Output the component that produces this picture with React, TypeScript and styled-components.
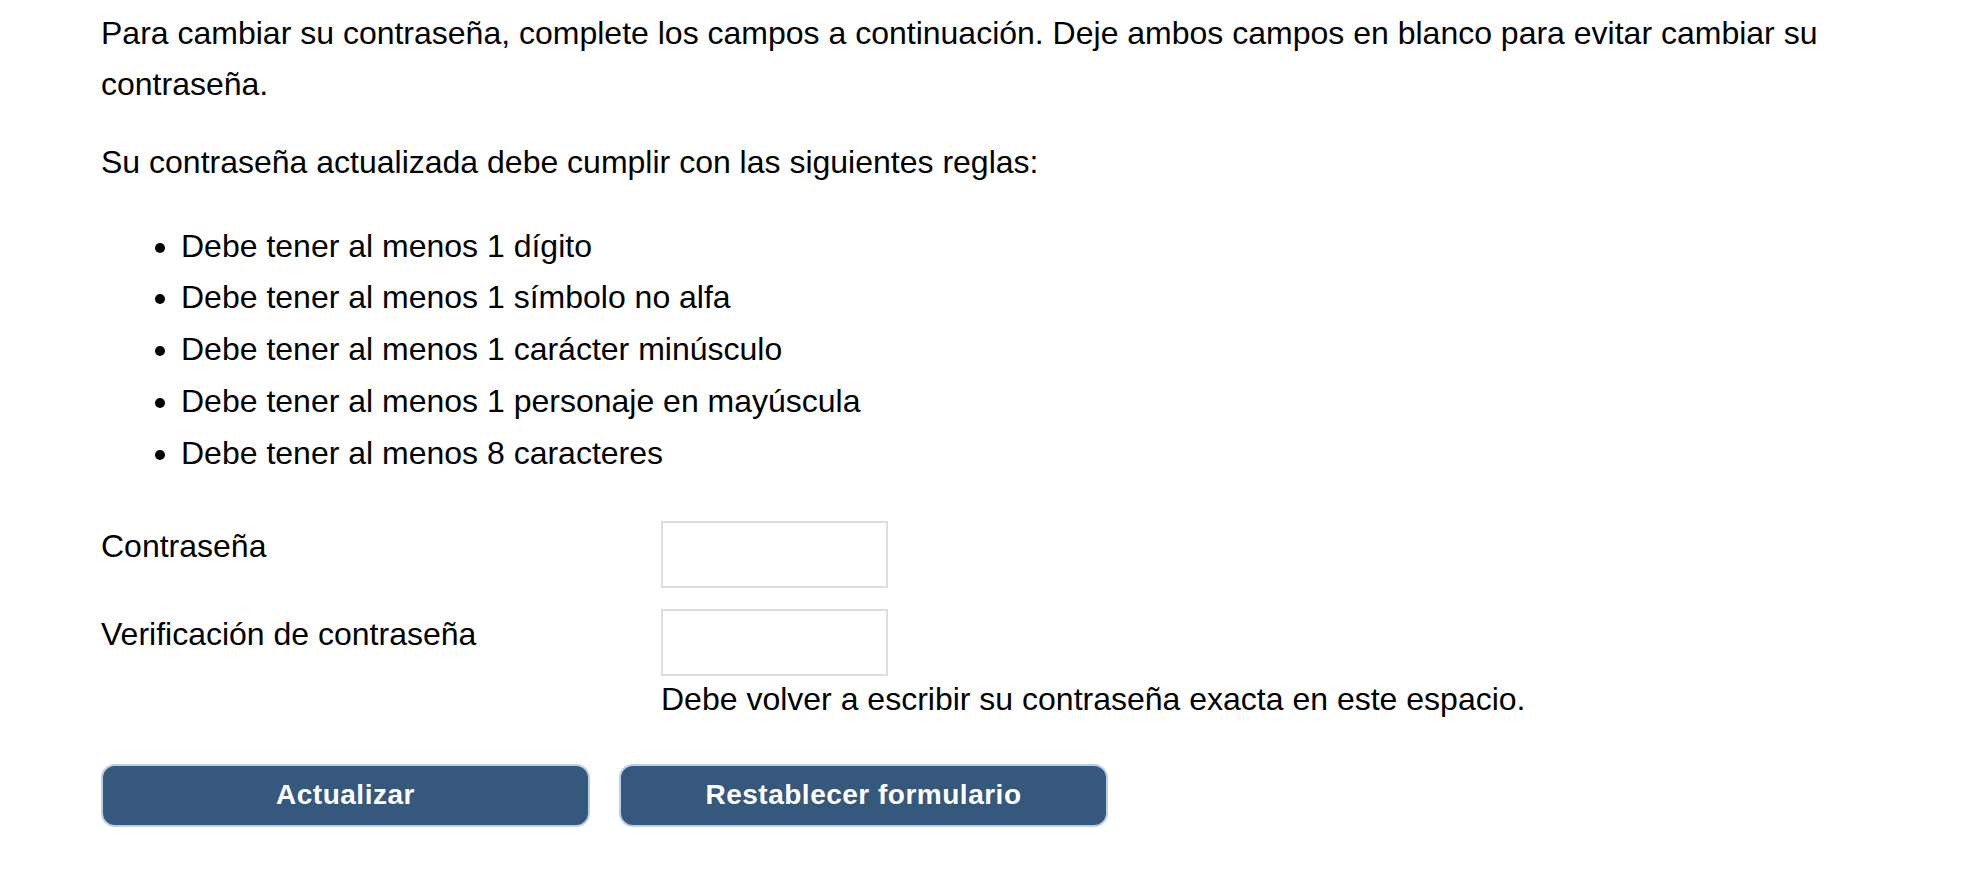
import React from "react";
import styled, { createGlobalStyle } from "styled-components";

const GlobalStyle = createGlobalStyle`
  html, body {
    margin: 0;
    padding: 0;
    background: #ffffff;
  }
  body {
    font-family: "Liberation Sans", Arial, Helvetica, sans-serif;
    color: #000000;
  }
`;

const Page = styled.main`
  box-sizing: border-box;
  width: 1861px;
  padding: 8px 0 40px 101px;
  font-size: 32px;
  line-height: 51.2px;
`;

const Paragraph = styled.p`
  margin: 0 0 27px 0;
`;

const RuleList = styled.ul`
  margin: 32px 0 41px 0;
  padding-left: 80px;
  list-style: disc outside;
`;

const RuleItem = styled.li`
  line-height: 51.8px;
`;

const FormGrid = styled.div`
  display: grid;
  grid-template-columns: 560px auto;
  row-gap: 21px;
  align-items: start;
`;

const Label = styled.label`
  display: block;
`;

const FieldCell = styled.div`
  display: flex;
  flex-direction: column;
  align-items: flex-start;
`;

const TextInput = styled.input`
  box-sizing: border-box;
  width: 227px;
  height: 67px;
  border: 2px solid #dddddd;
  border-radius: 0;
  background: #ffffff;
  padding: 0 10px;
  margin: 0;
  font-family: inherit;
  font-size: 28px;
  outline: none;
`;

const Help = styled.div`
  line-height: 51.2px;
  margin-top: -2px;
`;

const ButtonRow = styled.div`
  display: flex;
  gap: 29px;
  margin-top: 39px;
`;

const ActionButton = styled.button`
  box-sizing: border-box;
  width: 489px;
  height: 63px;
  border: 2px solid #b9d0e8;
  border-radius: 14px;
  background: #36587c;
  color: #ffffff;
  font-family: "Liberation Sans", Arial, Helvetica, sans-serif;
  font-weight: 700;
  font-size: 28px;
  letter-spacing: 0.5px;
  padding: 0;
  cursor: pointer;
`;

const rules = [
  "Debe tener al menos 1 dígito",
  "Debe tener al menos 1 símbolo no alfa",
  "Debe tener al menos 1 carácter minúsculo",
  "Debe tener al menos 1 personaje en mayúscula",
  "Debe tener al menos 8 caracteres",
];

export default function App() {
  return (
    <>
      <GlobalStyle />
      <Page>
        <Paragraph>
          Para cambiar su contraseña, complete los campos a continuación. Deje ambos campos en blanco para
          evitar cambiar su contraseña.
        </Paragraph>
        <Paragraph>Su contraseña actualizada debe cumplir con las siguientes reglas:</Paragraph>
        <RuleList>
          {rules.map((r) => (
            <RuleItem key={r}>{r}</RuleItem>
          ))}
        </RuleList>
        <FormGrid>
          <Label htmlFor="pw">Contraseña</Label>
          <FieldCell>
            <TextInput id="pw" type="password" />
          </FieldCell>
          <Label htmlFor="pw2">Verificación de contraseña</Label>
          <FieldCell>
            <TextInput id="pw2" type="password" />
            <Help>Debe volver a escribir su contraseña exacta en este espacio.</Help>
          </FieldCell>
        </FormGrid>
        <ButtonRow>
          <ActionButton type="submit">Actualizar</ActionButton>
          <ActionButton type="reset">Restablecer formulario</ActionButton>
        </ButtonRow>
      </Page>
    </>
  );
}
